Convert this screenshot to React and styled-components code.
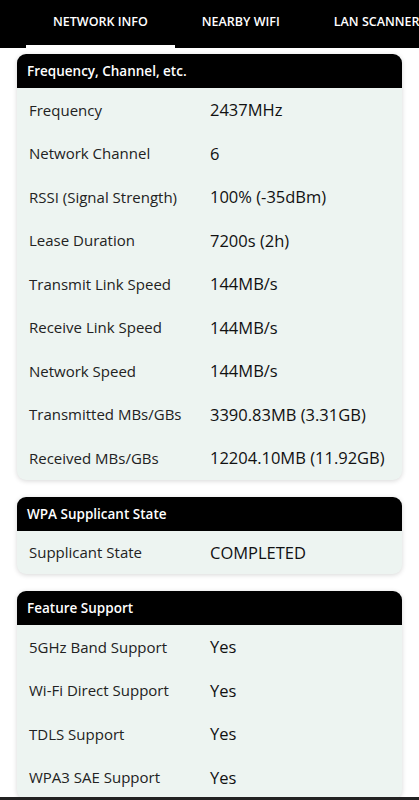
import React from 'react'
import styled, { createGlobalStyle } from 'styled-components'

const GlobalStyle = createGlobalStyle`
  body {
    margin: 0;
    background: #ffffff;
    font-family: "Open Sans", "Noto Sans", sans-serif;
  }
`

const Page = styled.div`
  width: 419px;
  overflow: hidden;
`

const TabBar = styled.div`
  display: flex;
  height: 48px;
  background: #000;
  padding-left: 26px;
  white-space: nowrap;
  overflow: hidden;
`

const Tab = styled.div`
  padding: 0 27px 2px;
  display: flex;
  align-items: center;
  color: #fff;
  font-size: 12.5px;
  font-weight: 600;
  flex-shrink: 0;
  border-bottom: 3px solid ${p => (p.active ? '#fff' : 'transparent')};
  box-sizing: border-box;
`

const Cards = styled.div`
  display: flex;
  flex-direction: column;
  gap: 17px;
  padding: 6px 17px 0 17px;
`

const Card = styled.div`
  background: #edf4f1;
  border-radius: 9px;
  overflow: hidden;
  box-shadow: 0 1px 5px rgba(0, 0, 0, 0.16);
`

const CardHeader = styled.div`
  background: #000;
  color: #fff;
  height: 34px;
  display: flex;
  align-items: center;
  padding-left: 10px;
  font-size: 13.5px;
  font-weight: 600;
`

const Row = styled.div`
  display: flex;
  align-items: center;
  height: 43.5px;
  padding-left: 12px;
`

const Label = styled.div`
  width: 181px;
  flex-shrink: 0;
  font-size: 15px;
  color: #222;
`

const Value = styled.div`
  font-size: 16.5px;
  color: #111;
  white-space: nowrap;
`

const BottomEdge = styled.div`
  position: fixed;
  left: 0;
  right: 0;
  bottom: 0;
  height: 3px;
  background: #222;
`

const sections = [
  {
    title: 'Frequency, Channel, etc.',
    rows: [
      ['Frequency', '2437MHz'],
      ['Network Channel', '6'],
      ['RSSI (Signal Strength)', '100% (-35dBm)'],
      ['Lease Duration', '7200s (2h)'],
      ['Transmit Link Speed', '144MB/s'],
      ['Receive Link Speed', '144MB/s'],
      ['Network Speed', '144MB/s'],
      ['Transmitted MBs/GBs', '3390.83MB (3.31GB)'],
      ['Received MBs/GBs', '12204.10MB (11.92GB)'],
    ],
  },
  {
    title: 'WPA Supplicant State',
    rows: [['Supplicant State', 'COMPLETED']],
  },
  {
    title: 'Feature Support',
    rows: [
      ['5GHz Band Support', 'Yes'],
      ['Wi-Fi Direct Support', 'Yes'],
      ['TDLS Support', 'Yes'],
      ['WPA3 SAE Support', 'Yes'],
    ],
  },
]

export default function App() {
  return (
    <Page>
      <GlobalStyle />
      <TabBar>
        <Tab active>NETWORK INFO</Tab>
        <Tab>NEARBY WIFI</Tab>
        <Tab>LAN SCANNER</Tab>
      </TabBar>
      <Cards>
        {sections.map(s => (
          <Card key={s.title}>
            <CardHeader>{s.title}</CardHeader>
            {s.rows.map(([label, value]) => (
              <Row key={label}>
                <Label>{label}</Label>
                <Value>{value}</Value>
              </Row>
            ))}
          </Card>
        ))}
      </Cards>
      <BottomEdge />
    </Page>
  )
}
